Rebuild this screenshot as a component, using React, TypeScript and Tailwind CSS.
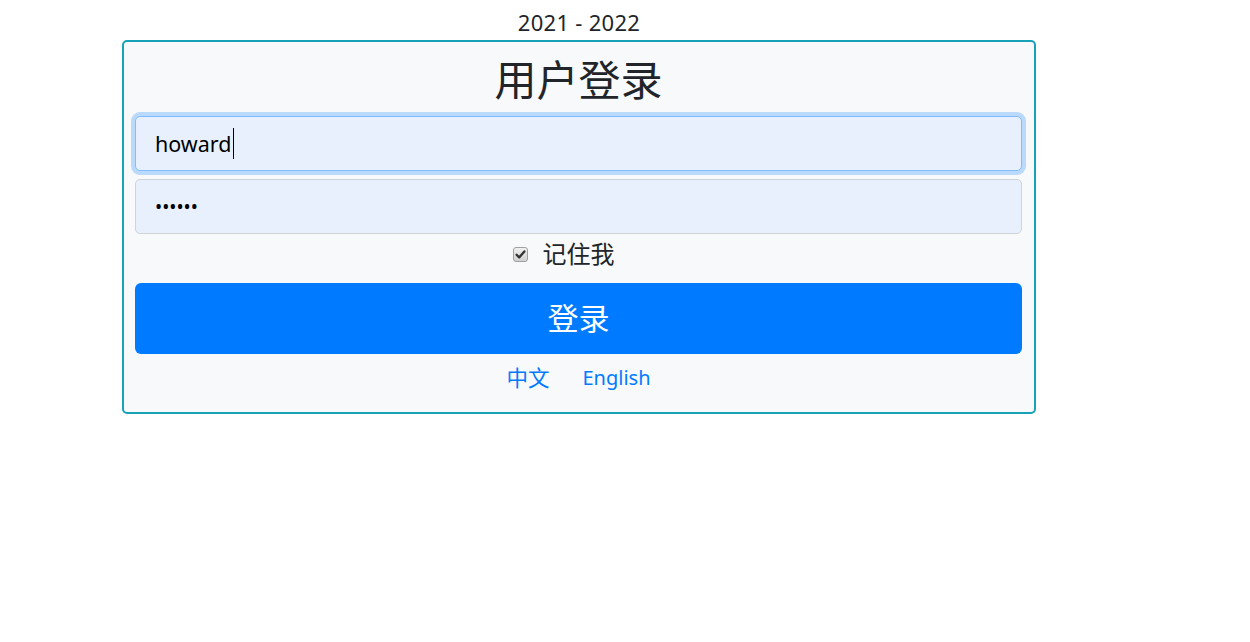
import React from "react";

export default function App() {
  const font = { fontFamily: '"Noto Sans", "Noto Sans CJK SC", sans-serif' };
  return (
    <div className="min-h-[642px] w-[1250px] bg-white text-[#212529]" style={font}>
      <div className="ml-[122px] w-[914px]">
        <div className="h-[40px] flex items-center justify-center text-[22px] leading-none pt-[4px] tracking-[0.3px]">2021 - 2022</div>
        <div className="border-2 border-[#17a2b8] rounded-[5px] bg-[#f8f9fa] pl-[11px] pr-[12px] pb-[14px]">
          <div className="h-[74px] pt-[2px] flex items-center justify-center text-[42px] leading-none">用户登录</div>
          <div className="relative">
            <input
              type="text"
              defaultValue="howard"
              className="block w-full h-[55px] rounded-[5px] border border-[#80bdff] bg-[#e8f0fe] pl-[19px] text-[21.5px] text-black outline-none shadow-[0_0_0_4px_rgba(0,123,255,0.25)]"
              style={font}
            />
            <span className="absolute left-[98px] top-[12px] h-[31px] w-[1px] bg-black pointer-events-none" />
          </div>
          <input
            type="password"
            defaultValue="123456"
            className="block w-full h-[55px] mt-[8px] rounded-[5px] border border-[#ced4da] bg-[#e8f0fe] pl-[19px] text-[19px] text-black outline-none"
            style={font}
          />
          <div className="h-[40px] flex items-center justify-center pr-[30px]">
            <label className="flex items-center gap-[15px] text-[24px] leading-none">
              <span className="relative w-[15px] h-[15px] flex shrink-0">
                <input
                  type="checkbox"
                  defaultChecked
                  className="appearance-none m-0 w-[15px] h-[15px] rounded-[3px] border border-[#a0a0a0] bg-gradient-to-b from-[#f0f0f0] to-[#d0d0d0]"
                />
                <svg viewBox="0 0 15 15" className="absolute left-0 top-0 w-[15px] h-[15px] pointer-events-none">
                  <path d="M3.6 7.8 L6.2 10.4 L11.4 4.4" fill="none" stroke="#333" strokeWidth="2.3" strokeLinecap="round" strokeLinejoin="round" />
                </svg>
              </span>
              <span>记住我</span>
            </label>
          </div>
          <button
            className="block w-full h-[71px] mt-[9px] rounded-[6px] bg-[#007bff] text-white text-[31px] leading-none"
            style={font}
          >
            登录
          </button>
          <div className="h-[40px] mt-[4px] flex items-center justify-center gap-[33px] text-[20px] text-[#007bff] leading-none">
            <a href="#" className="text-[21.5px]">中文</a>
            <a href="#">English</a>
          </div>
        </div>
      </div>
    </div>
  );
}
